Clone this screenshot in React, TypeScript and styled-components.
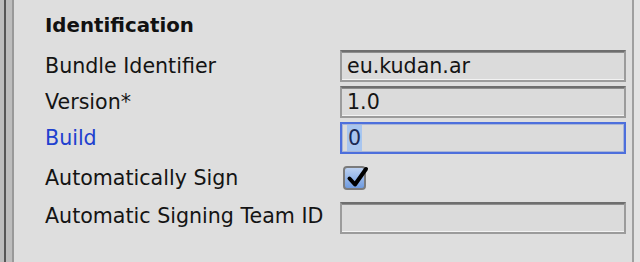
import React from "react";
import styled, { createGlobalStyle } from "styled-components";

const Global = createGlobalStyle`
  html, body { margin: 0; padding: 0; background: #dedede; }
  body { font-family: "DejaVu Sans", "Liberation Sans", sans-serif; }
`;

const Frame = styled.div`
  display: flex;
  width: 640px;
  height: 262px;
  background: #dedede;
  overflow: hidden;
`;

const Gutter = styled.div`
  width: 14px;
  flex: none;
  background: linear-gradient(
    to right,
    #bdbdbd 0 4px,
    #565656 4px 6px,
    #bdbdbd 6px 12px,
    #999999 12px 14px
  );
`;

const RightEdge = styled.div`
  width: 8px;
  flex: none;
  background: linear-gradient(to right, #9f9f9f 0 2px, #e3e3e3 2px 8px);
`;

const Content = styled.div`
  flex: 1;
  padding: 10px 6px 0 31px;
  display: flex;
  flex-direction: column;
`;

const Heading = styled.div`
  font-weight: bold;
  font-size: 19.8px;
  line-height: 32px;
  height: 32px;
  margin-bottom: 6px;
  color: #111;
`;

const Row = styled.div<{ $h: number; $mt?: number }>`
  display: grid;
  grid-template-columns: 295px 1fr;
  align-items: center;
  height: ${(p) => p.$h}px;
  margin-top: ${(p) => p.$mt ?? 0}px;
`;

const Label = styled.span<{ $active?: boolean }>`
  font-size: 20.6px;
  color: ${(p) => (p.$active ? "#2040cf" : "#141414")};
  white-space: nowrap;
`;

const Field = styled.div<{ $focus?: boolean; $shift?: number }>`
  box-sizing: border-box;
  height: 32px;
  margin-top: ${(p) => p.$shift ?? 0}px;
  border: 2px solid ${(p) => (p.$focus ? "#4d6fdc" : "#9b9b9b")};
  border-top-color: ${(p) => (p.$focus ? "#4d6fdc" : "#6e6e6e")};
  background: #dbdbdb;
  box-shadow: ${(p) =>
    p.$focus
      ? "inset 0 0 0 1px #a9b5d6"
      : "inset 0 -1px 0 #f3f3f3, inset 0 1px 0 #8d8d8d"};
  padding: 0 0 0 5px;
  display: flex;
  align-items: center;
  font-size: 20.6px;
  color: #141414;
  white-space: nowrap;
  overflow: hidden;
`;

const Selected = styled.span`
  background: #a8c5ef;
  color: #1a2a55;
  align-self: stretch;
  display: flex;
  align-items: center;
  padding: 0 1px;
  margin-top: 1px;
  margin-bottom: 1px;
`;

const CheckBox = styled.div`
  box-sizing: border-box;
  width: 23px;
  height: 24px;
  margin-left: 3px;
  border: 2px solid #7b7b7b;
  border-radius: 4px;
  background: linear-gradient(#bcd1f1, #6f9bdf);
  position: relative;
  overflow: visible;

  svg {
    position: absolute;
    left: 1px;
    top: -3px;
  }
`;

export default function App() {
  return (
    <>
      <Global />
      <Frame>
        <Gutter />
        <Content>
          <Heading>Identification</Heading>
          <Row $h={36}>
            <Label>Bundle Identifier</Label>
            <Field>eu.kudan.ar</Field>
          </Row>
          <Row $h={36}>
            <Label>Version*</Label>
            <Field>1.0</Field>
          </Row>
          <Row $h={36}>
            <Label $active>Build</Label>
            <Field $focus>
              <Selected>0</Selected>
            </Field>
          </Row>
          <Row $h={36} $mt={4}>
            <Label>Automatically Sign</Label>
            <CheckBox>
              <svg width="24" height="24" viewBox="0 0 24 24">
                <path
                  d="M3.5 13.5 L9 19.5 L20 4"
                  fill="none"
                  stroke="#000"
                  strokeWidth="4"
                  strokeLinecap="round"
                  strokeLinejoin="round"
                />
              </svg>
            </CheckBox>
          </Row>
          <Row $h={36} $mt={2}>
            <Label>Automatic Signing Team ID</Label>
            <Field $shift={4} />
          </Row>
        </Content>
        <RightEdge />
      </Frame>
    </>
  );
}
